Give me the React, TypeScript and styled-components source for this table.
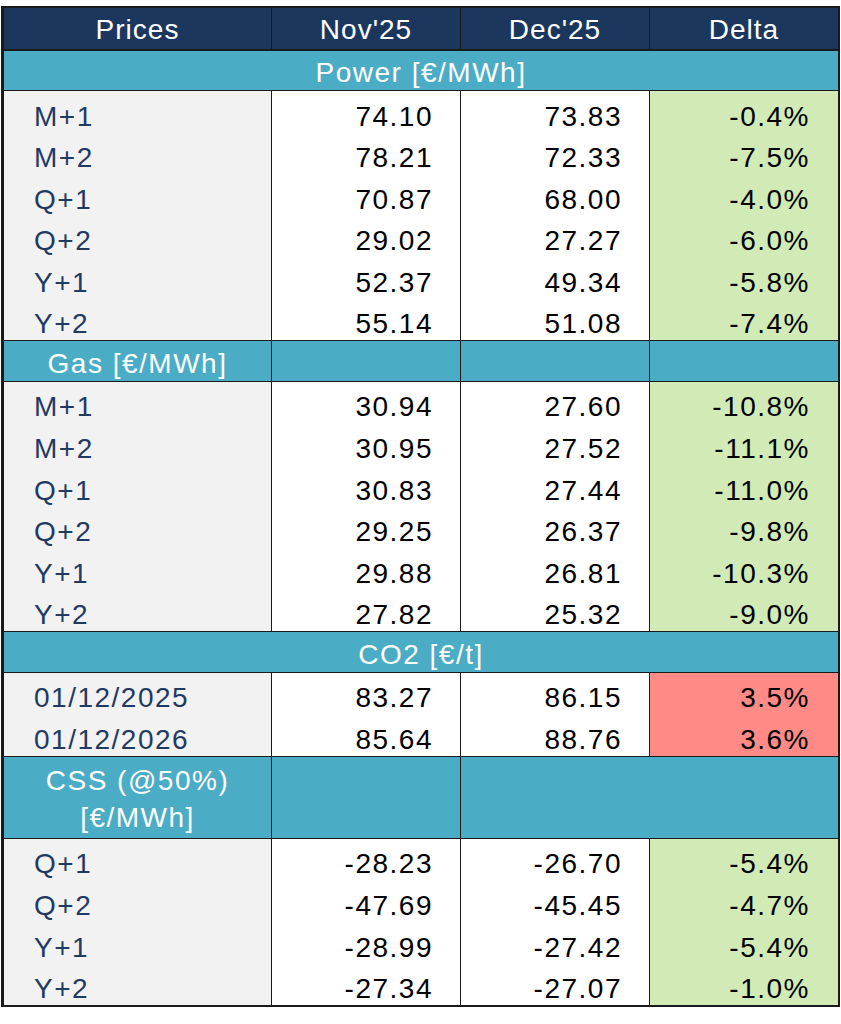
import React from 'react';
import styled, { createGlobalStyle } from 'styled-components';

const GlobalStyle = createGlobalStyle`
  html, body {
    margin: 0;
    padding: 0;
    background: #ffffff;
  }
  body {
    font-family: "Liberation Sans", Arial, sans-serif;
  }
`;

const colors = {
  navy: '#1c375e',
  teal: '#4bacc6',
  label: '#f2f2f2',
  labelText: '#1f3a63',
  green: '#d1eab6',
  red: '#ff8a86',
  line: '#1a1a1a',
};

type Tone = 'green' | 'red';

type Row = { label: string; nov: string; dec: string; delta: string; tone: Tone };

const power: Row[] = [
  { label: 'M+1', nov: '74.10', dec: '73.83', delta: '-0.4%', tone: 'green' },
  { label: 'M+2', nov: '78.21', dec: '72.33', delta: '-7.5%', tone: 'green' },
  { label: 'Q+1', nov: '70.87', dec: '68.00', delta: '-4.0%', tone: 'green' },
  { label: 'Q+2', nov: '29.02', dec: '27.27', delta: '-6.0%', tone: 'green' },
  { label: 'Y+1', nov: '52.37', dec: '49.34', delta: '-5.8%', tone: 'green' },
  { label: 'Y+2', nov: '55.14', dec: '51.08', delta: '-7.4%', tone: 'green' },
];

const gas: Row[] = [
  { label: 'M+1', nov: '30.94', dec: '27.60', delta: '-10.8%', tone: 'green' },
  { label: 'M+2', nov: '30.95', dec: '27.52', delta: '-11.1%', tone: 'green' },
  { label: 'Q+1', nov: '30.83', dec: '27.44', delta: '-11.0%', tone: 'green' },
  { label: 'Q+2', nov: '29.25', dec: '26.37', delta: '-9.8%', tone: 'green' },
  { label: 'Y+1', nov: '29.88', dec: '26.81', delta: '-10.3%', tone: 'green' },
  { label: 'Y+2', nov: '27.82', dec: '25.32', delta: '-9.0%', tone: 'green' },
];

const co2: Row[] = [
  { label: '01/12/2025', nov: '83.27', dec: '86.15', delta: '3.5%', tone: 'red' },
  { label: '01/12/2026', nov: '85.64', dec: '88.76', delta: '3.6%', tone: 'red' },
];

const css: Row[] = [
  { label: 'Q+1', nov: '-28.23', dec: '-26.70', delta: '-5.4%', tone: 'green' },
  { label: 'Q+2', nov: '-47.69', dec: '-45.45', delta: '-4.7%', tone: 'green' },
  { label: 'Y+1', nov: '-28.99', dec: '-27.42', delta: '-5.4%', tone: 'green' },
  { label: 'Y+2', nov: '-27.34', dec: '-27.07', delta: '-1.0%', tone: 'green' },
];

const Table = styled.div`
  margin: 6px 0 0 1px;
  width: 839px;
  box-sizing: border-box;
  border: 2px solid ${colors.line};
  border-left-width: 3px;
  background: ${colors.line};
  display: grid;
  grid-template-columns: 267px 188px 188px 1fr;
  grid-auto-rows: 41.55px;
  column-gap: 1px;
  font-size: 28px;
  letter-spacing: 1.5px;
`;

const Cell = styled.div`
  box-sizing: border-box;
  display: flex;
  align-items: flex-end;
  line-height: 32px;
  white-space: nowrap;
`;

const HeaderCell = styled(Cell)`
  background: ${colors.navy};
  color: #ffffff;
  justify-content: center;
  align-items: center;
  padding-top: 4px;
  border-bottom: 1px solid ${colors.line};
  letter-spacing: 1px;
`;

const SectionCell = styled(Cell)<{ $span?: number; $rows?: number; $center?: boolean }>`
  background: ${colors.teal};
  color: #ffffff;
  grid-column: span ${(p) => p.$span ?? 1};
  grid-row: span ${(p) => p.$rows ?? 1};
  justify-content: center;
  border-top: 1px solid ${colors.line};
  border-bottom: 1px solid ${colors.line};
  padding-bottom: ${(p) => (p.$rows && p.$rows > 1 ? '0' : '1px')};
  ${(p) =>
    p.$center &&
    `
    align-items: center;
    white-space: normal;
    text-align: center;
    line-height: 37px;
    padding: 4px 40px 0;
  `}
`;

const LabelCell = styled(Cell)`
  background: ${colors.label};
  color: ${colors.labelText};
  padding-left: 30px;
`;

const ValueCell = styled(Cell)`
  background: #ffffff;
  color: #000000;
  justify-content: flex-end;
  padding-right: 27px;
`;

const DeltaCell = styled(ValueCell)<{ $tone: Tone }>`
  background: ${(p) => (p.$tone === 'red' ? colors.red : colors.green)};
  padding-right: 28px;
`;

const DataRows: React.FC<{ rows: Row[] }> = ({ rows }) => (
  <>
    {rows.map((r, i) => (
      <React.Fragment key={i}>
        <LabelCell>{r.label}</LabelCell>
        <ValueCell>{r.nov}</ValueCell>
        <ValueCell>{r.dec}</ValueCell>
        <DeltaCell $tone={r.tone}>{r.delta}</DeltaCell>
      </React.Fragment>
    ))}
  </>
);

export default function App() {
  return (
    <>
      <GlobalStyle />
      <Table>
        <HeaderCell>Prices</HeaderCell>
        <HeaderCell>Nov'25</HeaderCell>
        <HeaderCell>Dec'25</HeaderCell>
        <HeaderCell>Delta</HeaderCell>

        <SectionCell $span={4}>Power [€/MWh]</SectionCell>
        <DataRows rows={power} />

        <SectionCell>Gas [€/MWh]</SectionCell>
        <SectionCell />
        <SectionCell />
        <SectionCell />
        <DataRows rows={gas} />

        <SectionCell $span={4}>CO2 [€/t]</SectionCell>
        <DataRows rows={co2} />

        <SectionCell $rows={2} $center>
          CSS (@50%) [€/MWh]
        </SectionCell>
        <SectionCell $rows={2} />
        <SectionCell $rows={2} $span={2} />
        <DataRows rows={css} />
      </Table>
    </>
  );
}
